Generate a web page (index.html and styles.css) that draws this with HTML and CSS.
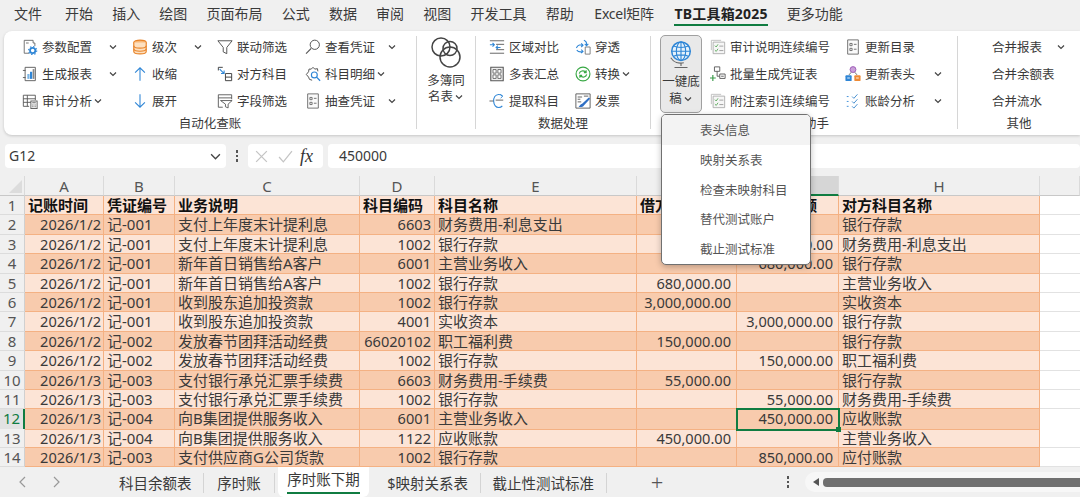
FILE: index.html
```html
<!DOCTYPE html>
<html lang="zh-CN">
<head>
    <meta charset="UTF-8">
    <title>TB工具箱2025</title>
    <link rel="stylesheet" href="styles.css">
</head>
<body>
    <svg class="defs" aria-hidden="true">
        <symbol id="chev" viewBox="0 0 10 10"><path d="M2 3.5 5 6.5 8 3.5" fill="none" stroke="#444" stroke-width="1.2"/></symbol>
        <symbol id="param" viewBox="0 0 18 18"><path d="M8 16H2.5V1.5H12.5V4.5H14.5V8" fill="none" stroke="#666"/><path d="M4.5 4.5h3" stroke="#666"/><circle cx="12" cy="13" r="3" fill="none" stroke="#2f86d6" stroke-width="2"/><circle cx="12" cy="13" r="4.6" fill="none" stroke="#2f86d6" stroke-width="1.2" stroke-dasharray="1.6 2"/></symbol>
        <symbol id="report" viewBox="0 0 18 18"><path d="M3.5 1.5H15V16.5H3.5Z" fill="none" stroke="#555"/><path d="M1 5h3M1 13h3" stroke="#555"/><rect x="6" y="9" width="2.5" height="5.5" fill="#7ab5e6"/><rect x="9" y="6.5" width="2.5" height="8" fill="#2f86d6"/><rect x="12" y="3.5" width="2" height="11" fill="#888"/></symbol>
        <symbol id="audit" viewBox="0 0 18 18"><path d="M8 15H1.5V2.5H15V8M1.5 6.5H15M6 2.5V15M1.5 10.5H11" fill="none" stroke="#555"/><rect x="10" y="9" width="7" height="8.5" fill="#fff" stroke="#555"/><path d="M11.5 11h4M11.5 13.5h1M13 13.5h1M14.5 13.5h1M11.5 15.5h1M13 15.5h1M14.5 15.5h1" stroke="#555"/></symbol>
        <symbol id="db" viewBox="0 0 18 18"><ellipse cx="9" cy="4" rx="7" ry="2.8" fill="#f8b878" stroke="#e8842a" stroke-width="1.3"/><path d="M2 4V14C2 15.6 5 16.8 9 16.8S16 15.6 16 14V4" fill="#fde0c0" stroke="#e8842a" stroke-width="1.3"/><path d="M2 7.5C2 9.1 5 10.3 9 10.3S16 9.1 16 7.5M2 11C2 12.6 5 13.8 9 13.8S16 12.6 16 11" fill="none" stroke="#e8842a" stroke-width="1.3"/></symbol>
        <symbol id="up" viewBox="0 0 18 18"><path d="M9 16.5V2M3.5 7.5 9 2 14.5 7.5" fill="none" stroke="#2f86d6" stroke-width="1.2"/></symbol>
        <symbol id="down" viewBox="0 0 18 18"><path d="M9 1.5V16M3.5 10.5 9 16 14.5 10.5" fill="none" stroke="#2f86d6" stroke-width="1.2"/></symbol>
        <symbol id="funnel" viewBox="0 0 18 18"><path d="M1 2H17L11 9.5V16.5L7 14.5V9.5Z" fill="none" stroke="#555" stroke-width="1.1"/></symbol>
        <symbol id="opp" viewBox="0 0 18 18"><path d="M1.5 5V1.5H6.5M16.5 8.5V16.5H9.5V8.5ZM9.5 12.5H16.5" fill="none" stroke="#444" stroke-width="1.1"/><path d="M3 3.5 8 8.5M8 5V8.5H4.5" fill="none" stroke="#2f86d6" stroke-width="1.2"/></symbol>
        <symbol id="field" viewBox="0 0 18 18"><path d="M6.5 16H1.5V2H16.5V7M1.5 5.5H16.5" fill="none" stroke="#555"/><path d="M4 8.5H17L12.5 12.5V16.8L9.5 15.5V12.5Z" fill="#fff" stroke="#555"/></symbol>
        <symbol id="search" viewBox="0 0 18 18"><circle cx="11" cy="6.5" r="5.2" fill="none" stroke="#555" stroke-width="1.1"/><path d="M7 10.5 1.2 16.5" stroke="#555" stroke-width="1.3"/></symbol>
        <symbol id="gearsearch" viewBox="0 0 18 18"><path d="M9 1.5 11 3.5 14 3 14.5 6M8 16 5 15 4 12.5 1.5 9.5 4 6.5 4.5 3.5 7 3.5 9 1.5" fill="none" stroke="#555" stroke-width="1.1"/><circle cx="10.5" cy="10" r="3.3" fill="none" stroke="#2f86d6" stroke-width="1.3"/><path d="M13 12.5 17 16.5" stroke="#2f86d6" stroke-width="1.5"/></symbol>
        <symbol id="listdoc" viewBox="0 0 18 18"><path d="M3 1H15V17H3Z" fill="#fafafa" stroke="#666"/><path d="M5.5 5h2.5v2.5h-2.5zM5.5 10.5h2.5v2.5h-2.5z" fill="none" stroke="#666"/><path d="M10 6h3M10 11.5h3" stroke="#666"/></symbol>
        <symbol id="circles" viewBox="0 0 32 32"><g fill="none" stroke="#444" stroke-width="1.5"><circle cx="11" cy="10" r="9"/><circle cx="20" cy="11.5" r="7"/><circle cx="20" cy="20" r="10"/></g></symbol>
        <symbol id="compare" viewBox="0 0 18 18"><path d="M1 2H17M8 6H17M8 12H17M1 16H17" stroke="#555"/><path d="M1 6.5H6M4 4.5 6 6.5 4 8.5M13 9.5H8M10 7.5 8 9.5 10 11.5" fill="none" stroke="#2f86d6" stroke-width="1.2"/></symbol>
        <symbol id="pierce" viewBox="0 0 18 18"><path d="M11.5 9V17H17V9Z" fill="#fff" stroke="#777"/><path d="M1.5 10C4 6 6 6.5 9 7M7 5 9 7 7 9M10 1.5C12.5 2.5 13.5 4 13 7M11 5.5 13 7.5 15 5.5M2 12.5C4 15 6 15 9 14M7 12 9 14 7 16" fill="none" stroke="#2f86d6" stroke-width="1.2"/></symbol>
        <symbol id="gridbox" viewBox="0 0 18 18"><path d="M2 1.5H16V16.5H2Z" fill="#eee" stroke="#555" stroke-width="1.2"/><path d="M4.5 4H8V8H4.5ZM10 4H13.5V8H10ZM4.5 10H8V14H4.5ZM10 10H13.5V14H10Z" fill="#fff" stroke="#666"/></symbol>
        <symbol id="convert" viewBox="0 0 18 18"><circle cx="9" cy="9" r="7.8" fill="none" stroke="#39a845" stroke-width="1.3"/><path d="M4.8 8.5C5.5 5.5 9.5 4.5 12 7M12.5 4.8V7.4H10M13.2 9.5C12.5 12.5 8.5 13.5 6 11M5.5 13.2V10.6H8" fill="none" stroke="#39a845" stroke-width="1.3"/></symbol>
        <symbol id="extract" viewBox="0 0 18 18"><path d="M15 3.5C13 1 8.5 1 6.5 4S5 12 7 14.5 13 17 15 14.5" fill="none" stroke="#2f86d6" stroke-width="1.2"/><path d="M12.5 1.5 15.5 3.5 13 6" fill="none" stroke="#2f86d6"/><path d="M0.5 9H5M7.5 8H16" stroke="#555"/></symbol>
        <symbol id="invoice" viewBox="0 0 18 18"><path d="M1 1H17V17H1Z" fill="#fff" stroke="#555"/><path d="M3 4.5H8M3 7H6M3 10H7M10 3.5H15" stroke="#555"/><path d="M4 15.5C5.5 14 6 12.5 8 12L15.5 5 17 6.5 10 14C9 16 6 16 4 15.5Z" fill="#2f6fc4"/></symbol>
        <symbol id="globe" viewBox="0 0 28 32"><circle cx="14" cy="13" r="10" fill="#e6f2fb" stroke="#2f86d6" stroke-width="1.6"/><path d="M4 13H24M14 3V23M6 7.5C10 9.5 18 9.5 22 7.5M6 18.5C10 16.5 18 16.5 22 18.5" fill="none" stroke="#2f86d6" stroke-width="1.2"/><ellipse cx="14" cy="13" rx="5" ry="10" fill="none" stroke="#2f86d6" stroke-width="1.2"/><path d="M3 20C6 25 12 26.5 17 25.5M14 26V29M7 30.5H21" fill="none" stroke="#666" stroke-width="1.2"/></symbol>
        <symbol id="checks" viewBox="0 0 18 18"><path d="M1.5 12.5V1.5H12.5" fill="none" stroke="#bbb"/><path d="M3.5 3.5H16.5V16.5H3.5Z" fill="#f6f6f6" stroke="#aaa"/><path d="M5.5 7.5 7 9 9 6M5.5 12.5 7 14 9 11" fill="none" stroke="#5aa85a"/><path d="M10.5 8H15M10.5 13H15" stroke="#999"/></symbol>
        <symbol id="batch" viewBox="0 0 18 18"><path d="M5 1H11V6H5ZM11 9H17V14H11ZM8 6V11.5H11" fill="none" stroke="#555"/><path d="M12.5 11.5H15.5" stroke="#555"/><path d="M0 13.5H6.5M3.2 10V17" stroke="#3a9a4a" stroke-width="1.3"/></symbol>
        <symbol id="nodes" viewBox="0 0 18 18"><circle cx="9" cy="4" r="3.3" fill="#c9a0d8" stroke="#9a55b5"/><path d="M7 7 4.5 10M11 7 13.5 10" stroke="#666"/><rect x="0.5" y="10.5" width="7" height="6.5" rx="1" fill="#2f86d6"/><rect x="10.5" y="10.5" width="7" height="6.5" rx="1" fill="#ee8a35"/><path d="M2.5 13.5h3M12.5 13.5h3" stroke="#fff"/></symbol>
        <symbol id="aging" viewBox="0 0 18 18"><g fill="none" stroke="#2f86d6" stroke-dasharray="2 1.5"><path d="M2 4H5M2 9.5H5M2 15H5"/></g><path d="M8 4 10 6 14 1.5M8 9.5 10 11.5 14 7M8 15 10 17 14 12.5" fill="none" stroke="#4a90d0" stroke-width="1.1"/></symbol>
    </svg>

    <div class="menubar">
        <span class="first">文件</span><span>开始</span><span>插入</span><span>绘图</span><span>页面布局</span><span>公式</span><span>数据</span><span>审阅</span><span>视图</span><span>开发工具</span><span>帮助</span><span class="excel">Excel矩阵</span><span class="current">TB工具箱2025</span><span>更多功能</span>
    </div>

    <div class="ribbon">
        <div class="group g-auto">
            <div class="cols">
                <div class="item"><svg class="ic"><use href="#param"/></svg>参数配置<svg class="chev end"><use href="#chev"/></svg></div>
                <div class="item"><svg class="ic"><use href="#db"/></svg>级次<svg class="chev end"><use href="#chev"/></svg></div>
                <div class="item"><svg class="ic"><use href="#funnel"/></svg>联动筛选</div>
                <div class="item"><svg class="ic"><use href="#search"/></svg>查看凭证<svg class="chev end"><use href="#chev"/></svg></div>
                <div class="item"><svg class="ic"><use href="#report"/></svg>生成报表<svg class="chev end"><use href="#chev"/></svg></div>
                <div class="item"><svg class="ic"><use href="#up"/></svg>收缩</div>
                <div class="item"><svg class="ic"><use href="#opp"/></svg>对方科目</div>
                <div class="item"><svg class="ic"><use href="#gearsearch"/></svg>科目明细<svg class="chev"><use href="#chev"/></svg></div>
                <div class="item"><svg class="ic"><use href="#audit"/></svg>审计分析<svg class="chev"><use href="#chev"/></svg></div>
                <div class="item"><svg class="ic"><use href="#down"/></svg>展开</div>
                <div class="item"><svg class="ic"><use href="#field"/></svg>字段筛选</div>
                <div class="item"><svg class="ic"><use href="#listdoc"/></svg>抽查凭证<svg class="chev end"><use href="#chev"/></svg></div>
            </div>
            <div class="group-label">自动化查账</div>
        </div>
        <div class="sep"></div>
        <div class="group g-same">
            <div class="big">
                <svg class="big-ic"><use href="#circles"/></svg>
                <div>多簿同</div>
                <div>名表<svg class="chev"><use href="#chev"/></svg></div>
            </div>
        </div>
        <div class="sep"></div>
        <div class="group g-data">
            <div class="cols">
                <div class="item"><svg class="ic"><use href="#compare"/></svg>区域对比</div>
                <div class="item"><svg class="ic"><use href="#pierce"/></svg>穿透</div>
                <div class="item"><svg class="ic"><use href="#gridbox"/></svg>多表汇总</div>
                <div class="item"><svg class="ic"><use href="#convert"/></svg>转换<svg class="chev"><use href="#chev"/></svg></div>
                <div class="item"><svg class="ic"><use href="#extract"/></svg>提取科目</div>
                <div class="item"><svg class="ic"><use href="#invoice"/></svg>发票</div>
            </div>
            <div class="group-label">数据处理</div>
        </div>
        <div class="sep"></div>
        <div class="group g-draft">
            <div class="draft-body">
                <div class="big-btn">
                    <svg class="globe"><use href="#globe"/></svg>
                    <div>一键底</div>
                    <div>稿<svg class="chev"><use href="#chev"/></svg></div>
                </div>
                <div class="cols">
                    <div class="item"><svg class="ic"><use href="#checks"/></svg>审计说明连续编号</div>
                    <div class="item"><svg class="ic"><use href="#listdoc"/></svg>更新目录</div>
                    <div class="item"><svg class="ic"><use href="#batch"/></svg>批量生成凭证表</div>
                    <div class="item"><svg class="ic"><use href="#nodes"/></svg>更新表头<svg class="chev end"><use href="#chev"/></svg></div>
                    <div class="item"><svg class="ic"><use href="#checks"/></svg>附注索引连续编号</div>
                    <div class="item"><svg class="ic"><use href="#aging"/></svg>账龄分析<svg class="chev end"><use href="#chev"/></svg></div>
                </div>
            </div>
            <div class="group-label">底稿助手</div>
        </div>
        <div class="sep"></div>
        <div class="group g-other">
            <div class="cols">
                <div class="item">合并报表<svg class="chev end"><use href="#chev"/></svg></div>
                <div class="item">合并余额表</div>
                <div class="item">合并流水</div>
            </div>
            <div class="group-label">其他</div>
        </div>
    </div>

    <div class="popup">
        <div class="popup-item hover">表头信息</div>
        <div class="popup-item">映射关系表</div>
        <div class="popup-item">检查未映射科目</div>
        <div class="popup-item">替代测试账户</div>
        <div class="popup-item">截止测试标准</div>
    </div>

    <div class="formula-row">
        <div class="namebox">G12<svg class="namebox-arrow" viewBox="0 0 10 10"><path d="M1 3 5 7 9 3" fill="none" stroke="#444" stroke-width="1.2"/></svg></div>
        <div class="vdots"><i></i><i></i><i></i></div>
        <div class="fxbox">
            <svg class="fx-mark" viewBox="0 0 14 14"><path d="M2 2 12 12M12 2 2 12" stroke="#c4c4c4" stroke-width="1.2"/></svg>
            <svg class="fx-mark" viewBox="0 0 14 14"><path d="M1 7.5 5 12 13 2" fill="none" stroke="#c4c4c4" stroke-width="1.2"/></svg>
            <span class="fx">fx</span>
        </div>
        <div class="formula-input">450000</div>
    </div>

    <div class="sheet">
        <div class="row head-row">
            <div class="corner"><div class="tri"></div></div><div class="ch">A</div><div class="ch">B</div><div class="ch">C</div><div class="ch">D</div><div class="ch">E</div><div class="ch">F</div><div class="ch sel"></div><div class="ch">H</div><div class="ch"></div>
        </div>
        <div class="row light bold">
            <div class="rh">1</div><div>记账时间</div><div>凭证编号</div><div>业务说明</div><div>科目编码</div><div>科目名称</div><div>借方金额</div><div class="r credit-head">贷方金额</div><div>对方科目名称</div><div class="blank"></div>
        </div>
        <div class="row dark">
            <div class="rh">2</div><div class="r">2026/1/2</div><div>记-001</div><div>支付上年度末计提利息</div><div class="r">6603</div><div>财务费用-利息支出</div><div></div><div></div><div>银行存款</div><div class="blank"></div>
        </div>
        <div class="row light">
            <div class="rh">3</div><div class="r">2026/1/2</div><div>记-001</div><div>支付上年度末计提利息</div><div class="r">1002</div><div>银行存款</div><div></div><div class="r">80,000.00</div><div>财务费用-利息支出</div><div class="blank"></div>
        </div>
        <div class="row dark">
            <div class="rh">4</div><div class="r">2026/1/2</div><div>记-001</div><div>新年首日销售给A客户</div><div class="r">6001</div><div>主营业务收入</div><div></div><div class="r">680,000.00</div><div>银行存款</div><div class="blank"></div>
        </div>
        <div class="row light">
            <div class="rh">5</div><div class="r">2026/1/2</div><div>记-001</div><div>新年首日销售给A客户</div><div class="r">1002</div><div>银行存款</div><div class="r">680,000.00</div><div></div><div>主营业务收入</div><div class="blank"></div>
        </div>
        <div class="row dark">
            <div class="rh">6</div><div class="r">2026/1/2</div><div>记-001</div><div>收到股东追加投资款</div><div class="r">1002</div><div>银行存款</div><div class="r">3,000,000.00</div><div></div><div>实收资本</div><div class="blank"></div>
        </div>
        <div class="row light">
            <div class="rh">7</div><div class="r">2026/1/2</div><div>记-001</div><div>收到股东追加投资款</div><div class="r">4001</div><div>实收资本</div><div></div><div class="r">3,000,000.00</div><div>银行存款</div><div class="blank"></div>
        </div>
        <div class="row dark">
            <div class="rh">8</div><div class="r">2026/1/2</div><div>记-002</div><div>发放春节团拜活动经费</div><div class="r">66020102</div><div>职工福利费</div><div class="r">150,000.00</div><div></div><div>银行存款</div><div class="blank"></div>
        </div>
        <div class="row light">
            <div class="rh">9</div><div class="r">2026/1/2</div><div>记-002</div><div>发放春节团拜活动经费</div><div class="r">1002</div><div>银行存款</div><div></div><div class="r">150,000.00</div><div>职工福利费</div><div class="blank"></div>
        </div>
        <div class="row dark">
            <div class="rh">10</div><div class="r">2026/1/3</div><div>记-003</div><div>支付银行承兑汇票手续费</div><div class="r">6603</div><div>财务费用-手续费</div><div class="r">55,000.00</div><div></div><div>银行存款</div><div class="blank"></div>
        </div>
        <div class="row light">
            <div class="rh">11</div><div class="r">2026/1/3</div><div>记-003</div><div>支付银行承兑汇票手续费</div><div class="r">1002</div><div>银行存款</div><div></div><div class="r">55,000.00</div><div>财务费用-手续费</div><div class="blank"></div>
        </div>
        <div class="row dark">
            <div class="rh sel">12</div><div class="r">2026/1/3</div><div>记-004</div><div>向B集团提供服务收入</div><div class="r">6001</div><div>主营业务收入</div><div></div><div class="r active">450,000.00<span class="handle"></span></div><div>应收账款</div><div class="blank"></div>
        </div>
        <div class="row light">
            <div class="rh">13</div><div class="r">2026/1/3</div><div>记-004</div><div>向B集团提供服务收入</div><div class="r">1122</div><div>应收账款</div><div class="r">450,000.00</div><div></div><div>主营业务收入</div><div class="blank"></div>
        </div>
        <div class="row dark">
            <div class="rh">14</div><div class="r">2026/1/3</div><div>记-003</div><div>支付供应商G公司货款</div><div class="r">1002</div><div>银行存款</div><div></div><div class="r">850,000.00</div><div>应付账款</div><div class="blank"></div>
        </div>
    </div>

    <div class="tabbar">
        <div class="tab-nav">
            <svg viewBox="0 0 10 12"><path d="M7 1 2 6 7 11" fill="none" stroke="#999" stroke-width="1.2"/></svg>
            <svg viewBox="0 0 10 12"><path d="M3 1 8 6 3 11" fill="none" stroke="#999" stroke-width="1.2"/></svg>
        </div>
        <div class="tab w1">科目余额表</div>
        <div class="tab w2">序时账</div>
        <div class="tab active-tab">序时账下期</div>
        <div class="tab w3">$映射关系表</div>
        <div class="tab w4">截止性测试标准</div>
        <div class="plus">+</div>
        <div class="vdots tab-dots"><i></i><i></i><i></i></div>
        <div class="hscroll"><span class="scroll-arrow"></span><span class="thumb"></span></div>
    </div>
</body>
</html>
```
FILE: styles.css
```css
* {
    box-sizing: border-box;
}
html, body {
    margin: 0;
    height: 497px;
    overflow: hidden;
}
body {
    position: relative;
    background: #f0f0f0;
    font-family: "Noto Sans", "Noto Sans CJK SC", sans-serif;
    color: #3a3a3a;
}
.defs {
    display: none;
}

/* menu */
.menubar {
    height: 31px;
    display: flex;
    align-items: flex-start;
    gap: 19.2px;
    padding: 4px 0 0 14px;
    font-size: 14px;
    line-height: 19px;
    white-space: nowrap;
}
.menubar .first {
    margin-right: 3.8px;
}
.menubar .excel {
    margin: 0 1.5px;
    letter-spacing: -0.25px;
}
.menubar .current {
    position: relative;
    font-weight: 700;
    letter-spacing: 0.2px;
    color: #222;
}
.menubar .current::after {
    content: "";
    position: absolute;
    left: 0;
    right: 0;
    top: 20px;
    height: 2px;
    background: #107c41;
}

/* ribbon */
.ribbon {
    height: 104px;
    margin-left: 4px;
    display: flex;
    background: #fff;
    border-radius: 8px 0 0 8px;
    box-shadow: 0 1px 3px rgba(0,0,0,0.18);
    font-size: 12.5px;
    white-space: nowrap;
}
.sep {
    flex: none;
    width: 1px;
    margin: 5px 0 6px;
    background: #d6d6d6;
}
.group {
    flex: none;
    display: flex;
    flex-direction: column;
    padding-top: 2px;
}
.g-auto { width: 412px; }
.g-same { width: 58px; }
.g-data { width: 174px; }
.g-draft { width: 306px; }
.g-other { width: 122px; }
.cols {
    display: grid;
    grid-auto-rows: 27px;
    height: 81px;
}
.g-auto .cols {
    grid-template-columns: 110px 85px 88px 106px;
    padding-left: 18px;
}
.g-data .cols {
    grid-template-columns: 86px 80px;
    padding-left: 13px;
}
.g-other .cols {
    grid-template-columns: 1fr;
    padding-left: 34px;
}
.group-label {
    height: 17px;
    margin-top: 1px;
    line-height: 17px;
    text-align: center;
}
.item {
    display: flex;
    align-items: center;
}
.ic {
    flex: none;
    width: 16px;
    height: 16px;
    margin-right: 4px;
}
.chev {
    flex: none;
    width: 10px;
    height: 10px;
    margin-left: 1px;
    vertical-align: -1px;
}
.chev.end {
    margin-left: auto;
    margin-right: 14px;
}
.big {
    height: 98px;
    padding-top: 4px;
    text-align: center;
    line-height: 16px;
}
.big-ic {
    display: block;
    width: 32px;
    height: 32px;
    margin: 0 auto 4px;
}
.draft-body {
    display: flex;
    height: 81px;
}
.big-btn {
    flex: none;
    width: 42px;
    height: 78px;
    margin: 2px 8px 0 9px;
    padding-top: 3px;
    background: #e9e9e9;
    border: 1px solid #a0a0a0;
    border-radius: 5px;
    text-align: center;
    line-height: 16.5px;
}
.globe {
    display: block;
    width: 26px;
    height: 30px;
    margin: 0 auto 5px;
}
.g-draft .cols {
    grid-template-columns: 135px 112px;
}

/* dropdown */
.popup {
    position: absolute;
    left: 661px;
    top: 114px;
    width: 150px;
    height: 151px;
    background: #fff;
    border: 1px solid #707070;
    border-radius: 5px;
    box-shadow: 0 2px 6px rgba(0,0,0,0.25);
    overflow: hidden;
    z-index: 5;
    font-size: 12.5px;
    color: #555;
}
.popup-item {
    height: 29.8px;
    line-height: 31px;
    padding-left: 38px;
}
.popup-item.hover {
    background: #f3f3f3;
}

/* formula bar */
.formula-row {
    display: flex;
    height: 24px;
    margin: 9px 0 8px;
    padding-left: 5px;
    align-items: stretch;
}
.namebox,
.fxbox,
.formula-input {
    background: #fff;
    border-radius: 4px;
}
.namebox {
    position: relative;
    width: 221px;
    padding-left: 4px;
    font-size: 14px;
    line-height: 24px;
}
.namebox-arrow {
    position: absolute;
    right: 5px;
    top: 7px;
    width: 11px;
    height: 11px;
}
.vdots {
    width: 22px;
    display: flex;
    flex-direction: column;
    justify-content: center;
    align-items: center;
    gap: 2px;
}
.vdots i {
    width: 2.5px;
    height: 2.5px;
    background: #555;
}
.fxbox {
    width: 75px;
    display: flex;
    align-items: center;
    gap: 9px;
    padding-left: 6px;
}
.fx-mark {
    width: 15px;
    height: 15px;
}
.fx {
    font-family: "Liberation Serif", serif;
    font-style: italic;
    font-size: 18px;
    color: #333;
    margin-left: -2px;
}
.formula-input {
    flex: 1;
    margin-left: 5px;
    padding-left: 11px;
    font-size: 14px;
    line-height: 24px;
}

/* sheet */
.sheet {
    height: 291px;
    background: #fff;
    overflow: hidden;
    font-size: 15px;
}
.row {
    display: grid;
    grid-template-columns: 25px 79px 71px 185px 75px 202px 100px 102px 201px 40px;
    height: 19.4px;
    line-height: 19.4px;
    white-space: nowrap;
}
.row > div {
    padding: 0 3px;
    overflow: hidden;
    border-right: 1px solid #f4b183;
    border-bottom: 1px solid #f4b183;
}
.row.dark { background: #f8cbad; }
.row.light { background: #fce4d6; }
.row.bold {
    font-weight: 700;
    color: #111;
}
.row > .r {
    text-align: right;
    font-size: 14.6px;
    padding-right: 2px;
}
.row > .r:nth-child(5) {
    padding-right: 3px;
}
.row > .r:nth-child(7),
.row > .r:nth-child(8) {
    padding-right: 5px;
}
.row > .r.credit-head {
    font-size: 15px;
    padding-right: 21px;
}
.row > .rh {
    background: #f0f0f0;
    border-right: 1px solid #d0d0d0;
    border-bottom: 1px solid #dcdcdc;
    color: #555;
    font-weight: 400;
    text-align: center;
    padding: 0;
}
.row > .rh.sel {
    background: #e2e2e2;
    color: #107c41;
    border-right: 2px solid #107c41;
}
.row > .blank {
    background: #fff;
    border-right: none;
    border-bottom: 1px solid #e2e2e2;
}
.row.head-row {
    height: 20px;
    line-height: 20px;
}
.row.head-row > div {
    border-right: 1px solid #dadada;
    border-bottom: 1px solid #c8c8c8;
    background: #f0f0f0;
    color: #555;
    text-align: center;
    padding: 0;
}
.row.head-row > .sel {
    background: #d6d6d6;
    border-bottom: 2px solid #107c41;
}
.row.head-row > .corner {
    position: relative;
}
.tri {
    position: absolute;
    right: 2px;
    bottom: 2px;
    width: 0;
    height: 0;
    border-left: 13px solid transparent;
    border-bottom: 13px solid #dcdcdc;
}
.row > .active {
    position: relative;
    overflow: visible;
    outline: 2px solid #107c41;
    outline-offset: -1px;
    z-index: 2;
}
.handle {
    position: absolute;
    right: -3px;
    bottom: -3px;
    width: 5px;
    height: 5px;
    background: #107c41;
}

/* sheet tabs */
.tabbar {
    height: 30px;
    display: flex;
    align-items: center;
    font-size: 14.5px;
    white-space: nowrap;
    background: #f0f0f0;
}
.tab-nav {
    width: 108px;
    display: flex;
    gap: 23px;
    padding-left: 18px;
    flex: none;
}
.tab-nav svg {
    width: 10px;
    height: 12px;
}
.tab {
    flex: none;
    height: 20px;
    line-height: 20px;
    margin-top: 1px;
    text-align: center;
    border-right: 1px solid #d4d4d4;
}
.w1 { width: 96px; padding-left: 11px; text-align: left; }
.w2 { width: 71px; }
.tab.active-tab {
    width: 91px;
    height: 30px;
    margin: 0 3px;
    padding-top: 2px;
    position: relative;
    background: #fff;
    border: none;
    border-radius: 0 0 6px 6px;
}
.active-tab::after {
    content: "";
    position: absolute;
    left: 9px;
    right: 9px;
    bottom: 3px;
    height: 2px;
    background: #107c41;
}
.w3 { width: 109px; padding-right: 12px; text-align: right; }
.w4 { width: 126px; padding-right: 12px; text-align: right; }
.plus {
    width: 100px;
    text-align: center;
    font-size: 22px;
    font-weight: 300;
    line-height: 24px;
    color: #555;
}
.vdots.tab-dots {
    width: 22px;
    margin-left: 70px;
}
.hscroll {
    flex: 1;
    margin-left: 6px;
    height: 20px;
    background: #f7f7f7;
    border-radius: 10px 0 0 10px;
    display: flex;
    align-items: center;
    padding-left: 8px;
}
.scroll-arrow {
    width: 0;
    height: 0;
    border-right: 6px solid #555;
    border-top: 4px solid transparent;
    border-bottom: 4px solid transparent;
    margin-right: 4px;
}
.thumb {
    flex: 1;
    height: 9px;
    background: #707070;
    border-radius: 4px 0 0 4px;
}
```
